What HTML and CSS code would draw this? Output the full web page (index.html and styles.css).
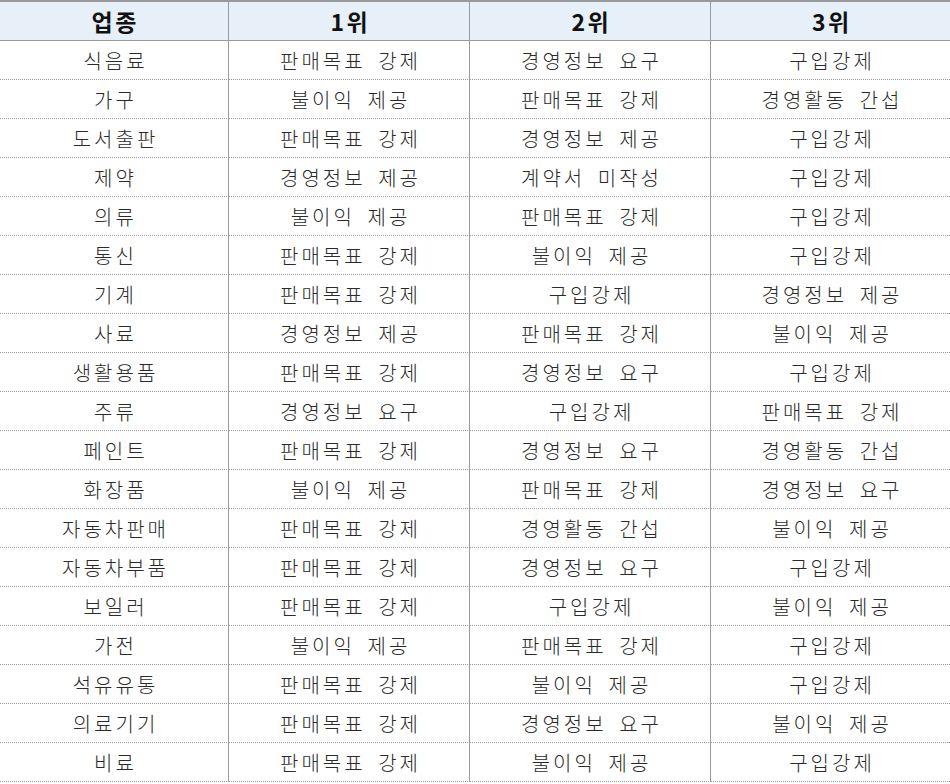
FILE: index.html
```html
<!DOCTYPE html>
<html lang="ko">
<head>
<meta charset="utf-8">
<link rel="stylesheet" href="styles.css">
</head>
<body>
<div class="table">
  <div class="cell head">업종</div><div class="cell head">1위</div><div class="cell head">2위</div><div class="cell head last">3위</div>
  <div class="cell">식음료</div><div class="cell">판매목표 강제</div><div class="cell">경영정보 요구</div><div class="cell last">구입강제</div>
  <div class="cell">가구</div><div class="cell">불이익 제공</div><div class="cell">판매목표 강제</div><div class="cell last">경영활동 간섭</div>
  <div class="cell">도서출판</div><div class="cell">판매목표 강제</div><div class="cell">경영정보 제공</div><div class="cell last">구입강제</div>
  <div class="cell">제약</div><div class="cell">경영정보 제공</div><div class="cell">계약서 미작성</div><div class="cell last">구입강제</div>
  <div class="cell">의류</div><div class="cell">불이익 제공</div><div class="cell">판매목표 강제</div><div class="cell last">구입강제</div>
  <div class="cell">통신</div><div class="cell">판매목표 강제</div><div class="cell">불이익 제공</div><div class="cell last">구입강제</div>
  <div class="cell">기계</div><div class="cell">판매목표 강제</div><div class="cell">구입강제</div><div class="cell last">경영정보 제공</div>
  <div class="cell">사료</div><div class="cell">경영정보 제공</div><div class="cell">판매목표 강제</div><div class="cell last">불이익 제공</div>
  <div class="cell">생활용품</div><div class="cell">판매목표 강제</div><div class="cell">경영정보 요구</div><div class="cell last">구입강제</div>
  <div class="cell">주류</div><div class="cell">경영정보 요구</div><div class="cell">구입강제</div><div class="cell last">판매목표 강제</div>
  <div class="cell">페인트</div><div class="cell">판매목표 강제</div><div class="cell">경영정보 요구</div><div class="cell last">경영활동 간섭</div>
  <div class="cell">화장품</div><div class="cell">불이익 제공</div><div class="cell">판매목표 강제</div><div class="cell last">경영정보 요구</div>
  <div class="cell">자동차판매</div><div class="cell">판매목표 강제</div><div class="cell">경영활동 간섭</div><div class="cell last">불이익 제공</div>
  <div class="cell">자동차부품</div><div class="cell">판매목표 강제</div><div class="cell">경영정보 요구</div><div class="cell last">구입강제</div>
  <div class="cell">보일러</div><div class="cell">판매목표 강제</div><div class="cell">구입강제</div><div class="cell last">불이익 제공</div>
  <div class="cell">가전</div><div class="cell">불이익 제공</div><div class="cell">판매목표 강제</div><div class="cell last">구입강제</div>
  <div class="cell">석유유통</div><div class="cell">판매목표 강제</div><div class="cell">불이익 제공</div><div class="cell last">구입강제</div>
  <div class="cell">의료기기</div><div class="cell">판매목표 강제</div><div class="cell">경영정보 요구</div><div class="cell last">불이익 제공</div>
  <div class="cell">비료</div><div class="cell">판매목표 강제</div><div class="cell">불이익 제공</div><div class="cell last">구입강제</div>
</div>
</body>
</html>
```
FILE: styles.css
```css
html, body {
  margin: 0;
  padding: 0;
  background: #ffffff;
}
body {
  width: 950px;
  height: 784px;
  overflow: hidden;
  font-family: "Noto Sans CJK KR", "Noto Sans", sans-serif;
}
.table {
  display: grid;
  grid-template-columns: 229px 241px 241px 239px;
  grid-auto-rows: 39px;
  border-top: 2px solid #9a9a9a;
}
.cell {
  display: flex;
  align-items: center;
  justify-content: center;
  border-right: 1px solid #9a9a9a;
  border-bottom: 1px dotted #9a9a9a;
  font-size: 20px;
  font-weight: 300;
  color: #2a2a2a;
  white-space: pre;
  letter-spacing: 3px;
  word-spacing: 4px;
  padding-left: 3px;
}
.cell.last {
  border-right: none;
}
.cell.head {
  background: #e7eff9;
  border-bottom: 1px solid #9a9a9a;
  font-weight: bold;
  color: #111111;
  font-size: 23px;
  letter-spacing: 2.5px;
  padding-left: 2.5px;
}
```
